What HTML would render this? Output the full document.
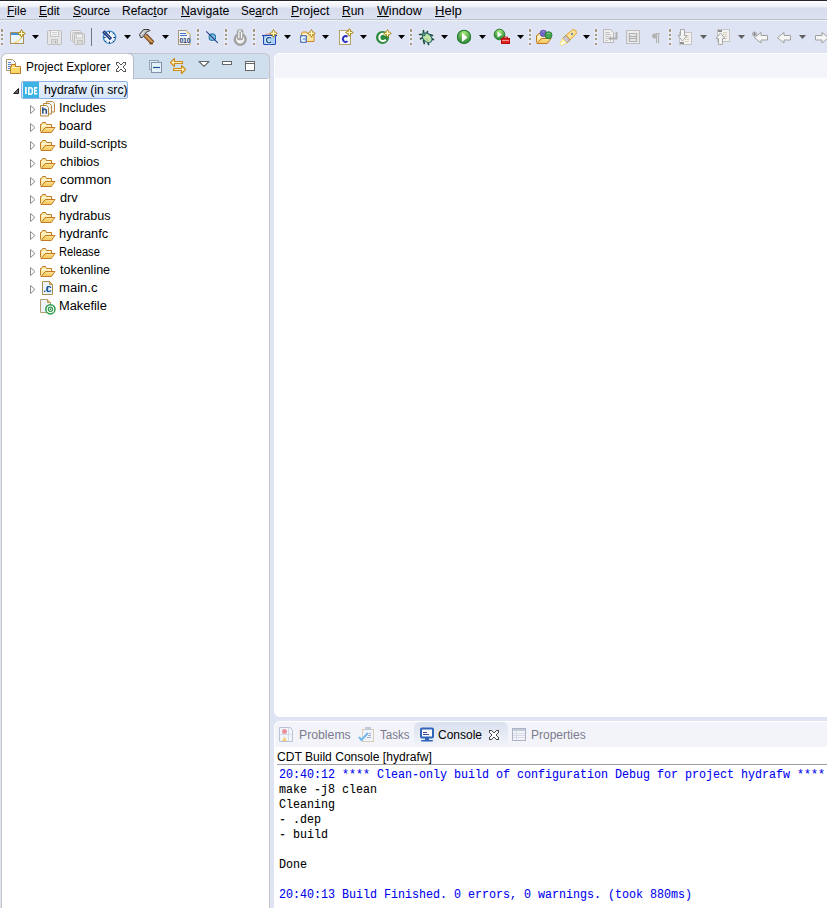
<!DOCTYPE html>
<html><head><meta charset="utf-8">
<style>
html,body{margin:0;padding:0;}
body{width:827px;height:908px;overflow:hidden;position:relative;background:#dfe4f4;font-family:"Liberation Sans",sans-serif;}
.a{position:absolute;}
.t{position:absolute;white-space:pre;font-family:"Liberation Sans",sans-serif;font-size:12px;line-height:14px;color:#000;transform-origin:0 0;}
.t u{text-decoration:underline;text-underline-offset:1px;}
.gray{color:#7a7a8c;}

.m{position:absolute;white-space:pre;font-family:"Liberation Mono",monospace;font-size:12.5px;line-height:15px;color:#000;transform:scaleX(0.9333);transform-origin:0 0;-webkit-text-stroke:0.08px currentColor;}
.blue{color:#0000f0;}
#topline{left:0;top:0;width:827px;height:1px;background:#24252b;}
#menubar{left:0;top:1px;width:827px;height:18px;background:linear-gradient(#ffffff 0px,#f4f6fb 3px,#eceff8 6px,#d7ddee 7px,#dce1f1 17px);}
#ml1{left:0;top:19px;width:827px;height:1px;background:#b9c0d1;}
#ml2{left:0;top:20px;width:827px;height:1px;background:#f1f2ee;}
#pe{left:1px;top:53px;width:267px;height:860px;background:linear-gradient(#fff,#fff) 0 24px/100% 100% no-repeat,linear-gradient(to right,#fff 125px,#d0dfee 125px);border:1px solid #c6c6c6;border-bottom:none;border-radius:6px 6px 0 0;}

#pehdrline{left:133px;top:78px;width:135px;height:1px;background:#b6bfd3;}
#petabr{left:133px;top:57px;width:1px;height:22px;background:#c6c6c6;}
#ed{left:274px;top:53px;width:560px;height:664px;background:#fff;border-radius:6px 0 0 6px;}
#edhdr{left:275px;top:54px;width:560px;height:24px;background:#f3f5fb;border-top-left-radius:5px;}
#con{left:274px;top:721px;width:560px;height:200px;background:#fff;border-radius:6px 0 0 0;}
#conhdr{left:275px;top:722px;width:560px;height:25px;background:#f3f4fa;border-top-left-radius:5px;}
#contab{left:414px;top:722px;width:94px;height:25px;background:linear-gradient(#d9e0ee,#f2f4f9);border-radius:6px 6px 0 0;}
#consep{left:277px;top:764px;width:550px;height:1px;background:#a0a0a0;}
</style></head><body>
<div class="a" id="topline"></div>
<div class="a" id="menubar"></div>
<div class="a" id="ml1"></div>
<div class="a" id="ml2"></div>
<div class="a" id="pe"></div>
<div class="a" id="pehdrline"></div>
<div class="a" id="ed"></div>
<div class="a" id="edhdr"></div>
<div class="a" id="con"></div>
<div class="a" id="conhdr"></div>
<div class="a" id="contab"></div>
<div class="a" id="consep"></div>
<div class="a" style="left:21px;top:81px;width:105px;height:16px;border:1px solid #8fb4e3;border-radius:2px;background:linear-gradient(#eaf2fd,#d6e6fa);"></div>
<div class="t menu" style="left:7.00px;top:4px;"><u>F</u>ile</div>
<div class="t menu" style="left:39.00px;top:4px;"><u>E</u>dit</div>
<div class="t menu" style="left:73.00px;top:4px;transform:scaleX(0.9730);"><u>S</u>ource</div>
<div class="t menu" style="left:122.00px;top:4px;">Refac<u>t</u>or</div>
<div class="t menu" style="left:181.00px;top:4px;transform:scaleX(1.0217);"><u>N</u>avigate</div>
<div class="t menu" style="left:241.03px;top:4px;transform:scaleX(0.9714);">Se<u>a</u>rch</div>
<div class="t menu" style="left:291.00px;top:4px;transform:scaleX(1.0278);"><u>P</u>roject</div>
<div class="t menu" style="left:342.00px;top:4px;"><u>R</u>un</div>
<div class="t menu" style="left:377.00px;top:4px;transform:scaleX(1.0476);"><u>W</u>indow</div>
<div class="t menu" style="left:435.00px;top:4px;transform:scaleX(1.0870);"><u>H</u>elp</div>
<div class="t ui" style="left:26.01px;top:60px;transform:scaleX(0.9880);">Project Explorer</div>
<div class="t ui" style="left:43.98px;top:83px;transform:scaleX(1.0190);">hydrafw (in src)</div>
<div class="t ui" style="left:58.95px;top:101px;transform:scaleX(1.0476);">Includes</div>
<div class="t ui" style="left:58.93px;top:119px;transform:scaleX(1.0714);">board</div>
<div class="t ui" style="left:58.94px;top:137px;transform:scaleX(1.0645);">build-scripts</div>
<div class="t ui" style="left:60.00px;top:155px;transform:scaleX(1.0556);">chibios</div>
<div class="t ui" style="left:60.00px;top:173px;transform:scaleX(1.1136);">common</div>
<div class="t ui" style="left:60.00px;top:191px;transform:scaleX(1.0625);">drv</div>
<div class="t ui" style="left:58.96px;top:209px;transform:scaleX(1.0426);">hydrabus</div>
<div class="t ui" style="left:58.93px;top:227px;transform:scaleX(1.0682);">hydranfc</div>
<div class="t ui" style="left:59.07px;top:245px;transform:scaleX(0.9286);">Release</div>
<div class="t ui" style="left:60.00px;top:263px;transform:scaleX(1.0426);">tokenline</div>
<div class="t ui" style="left:58.91px;top:281px;transform:scaleX(1.0909);">main.c</div>
<div class="t ui" style="left:58.93px;top:299px;transform:scaleX(1.0714);">Makefile</div>
<div class="t ui gray" style="left:298.98px;top:728px;transform:scaleX(1.0208);">Problems</div>
<div class="t ui gray" style="left:380.00px;top:728px;transform:scaleX(0.9655);">Tasks</div>
<div class="t ui" style="left:438.00px;top:728px;">Console</div>
<div class="t ui gray" style="left:531.00px;top:728px;">Properties</div>
<div class="t ui" style="left:276.99px;top:750px;transform:scaleX(1.0066);">CDT Build Console [hydrafw]</div>
<div class="m blue" style="left:279px;top:768px;">20:40:12 **** Clean-only build of configuration Debug for project hydrafw ****</div>
<div class="m" style="left:279px;top:783px;">make -j8 clean</div>
<div class="m" style="left:279px;top:798px;">Cleaning</div>
<div class="m" style="left:279px;top:813px;">- .dep</div>
<div class="m" style="left:279px;top:828px;">- build</div>
<div class="m" style="left:279px;top:858px;">Done</div>
<div class="m blue" style="left:279px;top:888px;">20:40:13 Build Finished. 0 errors, 0 warnings. (took 880ms)</div>
<svg class="a" style="left:0;top:0" width="827" height="908" viewBox="0 0 827 908">
<rect x="0" y="28" width="4" height="18" fill="#eef0f9" opacity="0.6"/>
<rect x="1" y="29" width="2" height="3" fill="#a39a80"/>
<rect x="1" y="34" width="2" height="2" fill="#a39a80"/>
<rect x="1" y="38" width="2" height="2" fill="#a39a80"/>
<rect x="1" y="43" width="2" height="2" fill="#a39a80"/>
<rect x="10.5" y="32.5" width="13" height="11" fill="#eaf6ff" stroke="#a89058"/>
<rect x="11" y="33" width="12" height="2" fill="#3d8fd6"/>
<path d="M13 43 Q20 42 22 36" stroke="#f3d67a" stroke-width="1.2" fill="none"/>
<path d="M21.5 29.6L23.0 32.0L25.4 33.5L23.0 35.0L21.5 37.4L20.0 35.0L17.6 33.5L20.0 32.0z" fill="#c9a020" stroke="#a07c10" stroke-width="0.7"/>
<path d="M21.5 30.9v5.2M18.9 33.5h5.2" stroke="#fff8d0" stroke-width="1.1"/>
<path d="M32 35h7l-3.5 4z" fill="#000"/>
<g transform="translate(47,30)"><path d="M0.5 1.5a1 1 0 0 1 1-1h12a1 1 0 0 1 1 1v12a1 1 0 0 1-1 1h-12a1 1 0 0 1-1-1z" fill="#e6e6e6" stroke="#bdbdbd"/><rect x="3.5" y="0.5" width="8" height="6" fill="#f4f4f4" stroke="#c4c4c4"/><path d="M5 2.5h5M5 4.5h5" stroke="#cfcfcf"/><rect x="4.5" y="9.5" width="6" height="5" fill="#d8d8d8" stroke="#c4c4c4"/><rect x="8" y="11" width="1" height="2" fill="#a8a8a8"/></g>
<g transform="translate(70,30)"><rect x="0.5" y="0.5" width="10" height="10" rx="1" fill="#ececec" stroke="#c4c4c4"/><rect x="2.5" y="2.5" width="10" height="10" rx="1" fill="#e6e6e6" stroke="#c4c4c4"/><path d="M4.5 4.5a1 1 0 0 1 1-1h8a1 1 0 0 1 1 1v9a1 1 0 0 1-1 1h-8a1 1 0 0 1-1-1z" fill="#e2e2e2" stroke="#bdbdbd"/><rect x="6.5" y="4" width="6" height="4" fill="#f2f2f2" stroke="#c8c8c8"/><rect x="7.5" y="10.5" width="5" height="4" fill="#d6d6d6" stroke="#c4c4c4"/></g>
<rect x="91" y="28" width="1" height="18" fill="#6f7787"/>
<circle cx="109.5" cy="37.3" r="6.1" fill="#f2f7fc" stroke="#3a88d0" stroke-width="1.3"/>
<path d="M109.5 31.5v2M109.5 41.5v2M103.6 37.5h2M113.4 37.5h2M105.2 41.8l1-1M113.8 41.8l-1-1M113.8 33.2l-1 1" stroke="#1f3050" stroke-width="1"/>
<path d="M103.3 31.3L111 39.2" stroke="#1a3a88" stroke-width="3.2"/><path d="M104.5 32.5L110 38" stroke="#f2e8a8" stroke-width="1" stroke-dasharray="1 0.6"/>
<path d="M124 35h7l-3.5 4z" fill="#000"/>
<path d="M145.2 35.2L152.8 43" stroke="#5a3010" stroke-width="4.6"/><path d="M145.2 35.2L152.8 43" stroke="#c08848" stroke-width="3"/><path d="M146 35.5L152 41.7" stroke="#e0b070" stroke-width="1"/>
<path d="M149.5 43.5h3.5" stroke="#6a3a10" stroke-width="1.5"/>
<path d="M139.5 34.5L143.5 29.5H149L150 30.5L146.5 32L142.5 37.5H140.5Z" fill="#c4c4c4" stroke="#3c3c3c" stroke-width="1"/><path d="M141.5 34.5L144 31.5" stroke="#eee" stroke-width="1"/>
<path d="M162 35h7l-3.5 4z" fill="#000"/>
<g transform="translate(178,30)"><path d="M0.5 0.5h8l3.5 3.5v10.5h-11.5z" fill="#f2f6fc" stroke="#a09878"/><path d="M8.5 0.5v3.5h3.5z" fill="#f0d890"/><path d="M2 3.5h6M2 5.5h7" stroke="#4a78c0"/><text x="1.5" y="13" font-family="Liberation Sans" font-weight="bold" font-size="7" fill="#1f3f6f" letter-spacing="-0.3">010</text></g>
<rect x="196" y="28" width="4" height="18" fill="#eef0f9" opacity="0.6"/>
<rect x="197" y="29" width="2" height="3" fill="#a39a80"/>
<rect x="197" y="34" width="2" height="2" fill="#a39a80"/>
<rect x="197" y="38" width="2" height="2" fill="#a39a80"/>
<rect x="197" y="43" width="2" height="2" fill="#a39a80"/>
<circle cx="212.3" cy="37.2" r="4.3" fill="#fff"/><circle cx="212.3" cy="37.2" r="3.3" fill="#80bcd8" stroke="#2a78ae" stroke-width="1.1"/><path d="M206.3 31.3L217.8 42.8" stroke="#1e3c88" stroke-width="1.1"/>
<rect x="224" y="28" width="4" height="18" fill="#eef0f9" opacity="0.6"/>
<rect x="225" y="29" width="2" height="3" fill="#a39a80"/>
<rect x="225" y="34" width="2" height="2" fill="#a39a80"/>
<rect x="225" y="38" width="2" height="2" fill="#a39a80"/>
<rect x="225" y="43" width="2" height="2" fill="#a39a80"/>
<circle cx="240.2" cy="39.3" r="5.4" fill="#f4f4f4" stroke="#a2a2a2" stroke-width="2.4"/>
<rect x="236.8" y="29.3" width="6.6" height="11" rx="2.2" fill="#a6a6a6"/><rect x="238.3" y="32.2" width="1.1" height="6" fill="#fff"/><rect x="241" y="32.2" width="1.1" height="6" fill="#fff"/><rect x="238.3" y="30.4" width="2.8" height="1.2" fill="#fff"/>
<rect x="252" y="28" width="4" height="18" fill="#eef0f9" opacity="0.6"/>
<rect x="253" y="29" width="2" height="3" fill="#a39a80"/>
<rect x="253" y="34" width="2" height="2" fill="#a39a80"/>
<rect x="253" y="38" width="2" height="2" fill="#a39a80"/>
<rect x="253" y="43" width="2" height="2" fill="#a39a80"/>
<path d="M265.5 34.5h5" stroke="#d8a898" stroke-width="2"/>
<rect x="263.5" y="35.5" width="12" height="9" rx="0.5" fill="#a8d0f4" stroke="#2848c0"/><path d="M262 35.5h15" stroke="#2848c0" stroke-width="1.2"/>
<path d="M271 38.3a2.6 2.6 0 1 0 0 3.6" stroke="#fff" stroke-width="3" fill="none"/><path d="M271 38.3a2.6 2.6 0 1 0 0 3.6" stroke="#1a5a9a" stroke-width="1.6" fill="none"/>
<path d="M273.5 29.5L275.0 31.9L277.4 33.4L275.0 34.9L273.5 37.3L272.0 34.9L269.6 33.4L272.0 31.9z" fill="#c9a020" stroke="#a07c10" stroke-width="0.7"/>
<path d="M273.5 30.799999999999997v5.2M270.9 33.4h5.2" stroke="#fff8d0" stroke-width="1.1"/>
<path d="M284 35h7l-3.5 4z" fill="#000"/>
<path d="M301.5 41.5v-8l1-1.5h4l1 1.5h6.5v8z" fill="#fde3a0" stroke="#d08828"/><path d="M303 34.5h10" stroke="#fff6d8"/>
<rect x="300.5" y="35.5" width="6" height="7" rx="0.5" fill="#8eb0e6" stroke="#5a78b4"/>
<path d="M305 37.8a1.9 1.9 0 1 0 0 2.6" stroke="#fff" stroke-width="1.4" fill="none"/>
<path d="M311.5 29.5L313.0 31.9L315.4 33.4L313.0 34.9L311.5 37.3L310.0 34.9L307.6 33.4L310.0 31.9z" fill="#c9a020" stroke="#a07c10" stroke-width="0.7"/>
<path d="M311.5 30.799999999999997v5.2M308.9 33.4h5.2" stroke="#fff8d0" stroke-width="1.1"/>
<path d="M322 35h7l-3.5 4z" fill="#000"/>
<rect x="339.5" y="30.5" width="11" height="14" fill="#f4f8fd" stroke="#b8a468"/>
<path d="M347.5 36.8a2.7 3 0 1 0 0 4.4" stroke="#3030c0" stroke-width="1.9" fill="none"/>
<path d="M349.4 28.6L350.9 31.0L353.29999999999995 32.5L350.9 34.0L349.4 36.4L347.9 34.0L345.5 32.5L347.9 31.0z" fill="#c9a020" stroke="#a07c10" stroke-width="0.7"/>
<path d="M349.4 29.9v5.2M346.79999999999995 32.5h5.2" stroke="#fff8d0" stroke-width="1.1"/>
<path d="M360 35h7l-3.5 4z" fill="#000"/>
<circle cx="382.5" cy="37.4" r="6.5" fill="#2e8a3e"/><path d="M385.8 35.3a3.6 3.6 0 1 0 0 4.3" stroke="#fff" stroke-width="2" fill="none"/>
<path d="M387.5 29.5L389.0 31.9L391.4 33.4L389.0 34.9L387.5 37.3L386.0 34.9L383.6 33.4L386.0 31.9z" fill="#c9a020" stroke="#a07c10" stroke-width="0.7"/>
<path d="M387.5 30.799999999999997v5.2M384.9 33.4h5.2" stroke="#fff8d0" stroke-width="1.1"/>
<path d="M398 35h7l-3.5 4z" fill="#000"/>
<rect x="409" y="28" width="4" height="18" fill="#eef0f9" opacity="0.6"/>
<rect x="410" y="29" width="2" height="3" fill="#a39a80"/>
<rect x="410" y="34" width="2" height="2" fill="#a39a80"/>
<rect x="410" y="38" width="2" height="2" fill="#a39a80"/>
<rect x="410" y="43" width="2" height="2" fill="#a39a80"/>
<g stroke="#1e4a30" stroke-width="1.6" fill="none" stroke-linecap="round"><path d="M423.5 30.5v3M427.5 31.5l-0.8 2.5M419.5 34.5h3M420.5 38.8l2-1M423.5 40.5l0.8 3M427.8 42l0.8 2.5M429.5 34.5l3 1M431.5 38.5l2 1.2"/></g>
<ellipse cx="427.2" cy="37.8" rx="3.9" ry="5.4" transform="rotate(-45 427.2 37.8)" fill="#c4e4a8" stroke="#226070" stroke-width="1.1"/>
<circle cx="423.8" cy="34.4" r="1.6" fill="#5aa060" stroke="#226070" stroke-width="0.8"/><path d="M426 38.5l2.5 2.5" stroke="#7ab068" stroke-width="1"/>
<path d="M441 35h7l-3.5 4z" fill="#000"/>
<defs><radialGradient id="gr" cx="0.5" cy="0.2" r="0.8"><stop offset="0" stop-color="#a8e878"/><stop offset="0.6" stop-color="#56a850"/><stop offset="1" stop-color="#2e8a38"/></radialGradient></defs>
<circle cx="464" cy="36.9" r="6.6" fill="url(#gr)" stroke="#1c7a2c" stroke-width="1.1"/><path d="M462 32.7L467.5 37.4L462 42z" fill="#fff"/>
<path d="M479 35h7l-3.5 4z" fill="#000"/>
<circle cx="499.5" cy="34.5" r="5.3" fill="url(#gr)" stroke="#1c7a2c"/><path d="M497.5 31.5l4.5 3l-4.5 3z" fill="#fff"/>
<rect x="501.5" y="38.5" width="8" height="5" fill="#e22020" stroke="#b01010"/><path d="M503.5 38.5v-1.5h4v1.5" stroke="#c01010" fill="none"/><path d="M502 40.5h7" stroke="#ff9090"/>
<path d="M517 35h7l-3.5 4z" fill="#000"/>
<rect x="528" y="28" width="4" height="18" fill="#eef0f9" opacity="0.6"/>
<rect x="529" y="29" width="2" height="3" fill="#a39a80"/>
<rect x="529" y="34" width="2" height="2" fill="#a39a80"/>
<rect x="529" y="38" width="2" height="2" fill="#a39a80"/>
<rect x="529" y="43" width="2" height="2" fill="#a39a80"/>
<g transform="translate(536,30)"><path d="M0.5 12.5V5.5H1.5L2.5 3.5H5.5L6.5 5.5H11.5V8.5" fill="#fbe9a8" stroke="#c27a22"/><path d="M1.5 6.8H10.8" stroke="#fff8dc" stroke-width="1.2"/><path d="M1 13.5L5.3 8.5H15L11.3 13.5Z" fill="#f7cf6a" stroke="#c27a22" stroke-linejoin="round"/><path d="M6.3 9.8H13.5" stroke="#fce7a6" stroke-width="1"/></g>
<circle cx="543.3" cy="33.4" r="3.3" fill="#7464c4" stroke="#5a4aa0" stroke-width="0.6"/><path d="M542 31.8h2.5" stroke="#a8a0e0" stroke-width="0.8"/>
<circle cx="548.5" cy="35.2" r="3.5" fill="#46a654" stroke="#1f7a30" stroke-width="0.9"/><path d="M547 33.5h3" stroke="#90d090" stroke-width="0.8"/>
<path d="M565.95 35.45L572.81 29.62L576.35 33.42L570.03 39.85ZL575.90 30.29" fill="#fbe49a" stroke="#e2a436" stroke-width="0.9"/>
<path d="M565.95 35.45L572.81 29.62L575.90 30.29L576.35 33.42L570.03 39.85Z" fill="#fbe49a" stroke="#e2a436" stroke-width="0.9"/>
<circle cx="572.02" cy="33.90" r="0.9" fill="#2a58b0"/>
<path d="M562.58 38.44L565.81 35.31L570.17 39.99L566.80 42.98Z" fill="#cbc7d0" stroke="#a88848" stroke-width="0.9"/>
<path d="M559.70 43.72L562.58 38.44L566.80 42.98L561.34 45.47Z" fill="#fff4b0" stroke="#f2d060" stroke-width="0.6"/>
<path d="M561.03 44.12L565.01 41.79" stroke="#fff" stroke-width="1.5"/>
<path d="M583 35h7l-3.5 4z" fill="#000"/>
<rect x="594" y="28" width="4" height="18" fill="#eef0f9" opacity="0.6"/>
<rect x="595" y="29" width="2" height="3" fill="#a39a80"/>
<rect x="595" y="34" width="2" height="2" fill="#a39a80"/>
<rect x="595" y="38" width="2" height="2" fill="#a39a80"/>
<rect x="595" y="43" width="2" height="2" fill="#a39a80"/>
<g stroke="#b8b8b8" fill="#eeeeee"><path d="M603.5 29.5h7l3 3v10h-10z"/></g><path d="M605.5 32.5h4M605.5 34.5h5M605.5 36.5h3M605.5 38.5h2M605.5 40.5h2" stroke="#bdbdbd"/>
<path d="M616.5 32v6.5h-5.5" stroke="#b0b0b0" stroke-width="2" fill="none"/><path d="M608 38.5l3-2.5v5z" fill="#b0b0b0"/>
<rect x="626.5" y="30.5" width="13" height="13" fill="#efefef" stroke="#bcbcbc"/><rect x="629.5" y="33.5" width="7" height="8" fill="#e4e4e4" stroke="#b0b0b0"/><path d="M630 36.5h6M630 38.5h6" stroke="#b0b0b0"/>
<path d="M628 32.5v10M638 32.5v10" stroke="#c0c0c0" stroke-dasharray="1 1"/>
<path d="M655.5 33.5h4.5M656.5 33.5v9.5M658.5 33.5v9.5" stroke="#b4b4b4" stroke-width="1.2"/><circle cx="654.5" cy="36" r="2.5" fill="#b4b4b4"/>
<rect x="668" y="28" width="4" height="18" fill="#eef0f9" opacity="0.6"/>
<rect x="669" y="29" width="2" height="3" fill="#a39a80"/>
<rect x="669" y="34" width="2" height="2" fill="#a39a80"/>
<rect x="669" y="38" width="2" height="2" fill="#a39a80"/>
<rect x="669" y="43" width="2" height="2" fill="#a39a80"/>
<rect x="679.5" y="32.5" width="12" height="12" fill="#f2f2f2" stroke="#c4c4c4"/><path d="M685 35.5h4M685 37.5h4M685 39.5h4M685 41.5h4" stroke="#d8d0b8"/><rect x="680" y="42" width="4" height="2" fill="#909090"/>
<path d="M680.5 29.5h4v6h2.5l-4.5 5.5l-4.5-5.5h2.5z" fill="#f4f4f4" stroke="#a8a8a8"/>
<path d="M700 35h7l-3.5 4z" fill="#606060"/>
<rect x="717.5" y="29.5" width="12" height="12" fill="#f2f2f2" stroke="#c4c4c4"/><path d="M723 32.5h4M723 34.5h4M723 36.5h4M723 38.5h4" stroke="#d8d0b8"/><rect x="718" y="30" width="4" height="2" fill="#909090"/>
<path d="M718.5 44.5h4v-6h2.5l-4.5-5.5l-4.5 5.5h2.5z" fill="#f4f4f4" stroke="#a8a8a8"/>
<path d="M738 35h7l-3.5 4z" fill="#606060"/>
<path d="M767.5 35.5v4.5h-6.5v3l-6.5-5.3l6.5-5.3v3.1z" fill="#f6f6f6" stroke="#a0a0a0"/>
<path d="M754.5 31.5v5M752 34h5M752.7 32.2l3.6 3.6M756.3 32.2l-3.6 3.6" stroke="#8a8a8a" stroke-width="0.9"/>
<path d="M790.5 35.5v4.5h-6.5v3l-6.5-5.3l6.5-5.3v3.1z" fill="#f6f6f6" stroke="#a0a0a0"/>
<path d="M799 35h7l-3.5 4z" fill="#606060"/>
<path d="M815.5 35.5v4.5h6.5v3l6.5-5.3l-6.5-5.3v3.1z" fill="#f6f6f6" stroke="#a0a0a0"/>
<path d="M6.5 59.5h6l3 3v8h-9z" fill="#f4f7fc" stroke="#a89868"/><path d="M8 62.5h3M8 64.5h3M8 66.5h3M8 68.5h3" stroke="#5a88d0"/>
<path d="M10.5 73.5v-7h1v-2h4v2h5v7z" fill="#fbd86a" stroke="#c0782a"/><path d="M11.5 67.5h8" stroke="#fff4c0"/>
<rect x="117" y="63" width="2" height="1" fill="#fff"/>
<rect x="123" y="63" width="2" height="1" fill="#fff"/>
<rect x="117" y="64" width="3" height="1" fill="#fff"/>
<rect x="122" y="64" width="3" height="1" fill="#fff"/>
<rect x="118" y="65" width="6" height="1" fill="#fff"/>
<rect x="119" y="66" width="4" height="1" fill="#fff"/>
<rect x="119" y="67" width="4" height="1" fill="#fff"/>
<rect x="118" y="68" width="6" height="1" fill="#fff"/>
<rect x="117" y="69" width="3" height="1" fill="#fff"/>
<rect x="122" y="69" width="3" height="1" fill="#fff"/>
<rect x="117" y="70" width="2" height="1" fill="#fff"/>
<rect x="123" y="70" width="2" height="1" fill="#fff"/>
<path d="M116 62h1v1h-1zM117 62h1v1h-1zM118 62h1v1h-1zM123 62h1v1h-1zM124 62h1v1h-1zM125 62h1v1h-1zM116 63h1v1h-1zM119 63h1v1h-1zM122 63h1v1h-1zM125 63h1v1h-1zM116 64h1v1h-1zM120 64h1v1h-1zM121 64h1v1h-1zM125 64h1v1h-1zM117 65h1v1h-1zM124 65h1v1h-1zM118 66h1v1h-1zM123 66h1v1h-1zM118 67h1v1h-1zM123 67h1v1h-1zM117 68h1v1h-1zM124 68h1v1h-1zM116 69h1v1h-1zM120 69h1v1h-1zM121 69h1v1h-1zM125 69h1v1h-1zM116 70h1v1h-1zM119 70h1v1h-1zM122 70h1v1h-1zM125 70h1v1h-1zM116 71h1v1h-1zM117 71h1v1h-1zM118 71h1v1h-1zM123 71h1v1h-1zM124 71h1v1h-1zM125 71h1v1h-1z" fill="#555555"/>
<path d="M127 54H128.5Q133 54 133 58.5V78H127Z" fill="#fff"/><path d="M128 53.5Q133.5 53.5 133.5 59V78.5" fill="none" stroke="#b2bacb" stroke-width="1"/>
<rect x="149.5" y="60.5" width="9" height="9" fill="#d8ecf8" stroke="#9aa2b8"/><rect x="151.5" y="62.5" width="10" height="10" fill="#e4f2fb" stroke="#8890a8"/><path d="M153 67.5h7" stroke="#1f4f8f" stroke-width="1.2"/>
<path d="M170.5 62.5L174.5 58.5V61.5H182.5V63.5H174.5V66.5Z" fill="#fff2c0" stroke="#cc8a18" stroke-width="1.1" stroke-linejoin="round"/>
<path d="M185.5 69.5L181.5 65.5V68.5H173.5V70.5H181.5V73.5Z" fill="#fff2c0" stroke="#cc8a18" stroke-width="1.1" stroke-linejoin="round"/>
<path d="M199 61.5H209L204 66.3Z" fill="#fff" stroke="#666" stroke-width="1.1" stroke-linejoin="round"/>
<rect x="222.5" y="61.5" width="9" height="3" fill="#fff" stroke="#666"/>
<rect x="245.5" y="61.5" width="9" height="9" fill="#fff" stroke="#666"/><rect x="246" y="63" width="8" height="1" fill="#666"/>
<path d="M13.7 93.5L18.5 88.5V93.5Z" fill="#6a6a6a" stroke="#1c1c1c" stroke-width="1" stroke-linejoin="round"/>
<rect x="23" y="82" width="16" height="16" fill="#3bb4e5"/>
<rect x="25" y="87" width="1.7" height="7" fill="#fff"/>
<path d="M28.8 87.8h1.5q2 0 2 2v2.4q0 2-2 2h-1.5z" stroke="#fff" stroke-width="1.5" fill="none"/>
<path d="M37.3 87.8h-2.6v5.9h2.6M34.7 90.7h2.3" stroke="#fff" stroke-width="1.5" fill="none"/>
<path d="M30.5 105.5L35 109.5L30.5 113.5z" fill="#fff" stroke="#8e8e8e" stroke-width="1"/>
<path d="M46.5 101.5h6l2 2v8.5h-8z" fill="#f2f6fc" stroke="#b88a3a"/>
<path d="M43.5 103.5h6l2 2v8.5h-8z" fill="#f2f6fc" stroke="#b88a3a"/>
<path d="M40.5 105.5h6l2 2v8.5h-8z" fill="#f2f6fc" stroke="#b88a3a"/>
<path d="M42.8 107.2V113.8M42.8 110.6Q43.3 109.2 44.8 109.2Q46.3 109.2 46.3 110.8V113.8" stroke="#2b4f7f" stroke-width="1.5" fill="none"/>
<path d="M30.5 123.5L35 127.5L30.5 131.5z" fill="#fff" stroke="#8e8e8e" stroke-width="1"/>
<g transform="translate(40,119)"><path d="M0.5 12.5V5.5H1.5L2.5 3.5H5.5L6.5 5.5H11.5V8.5" fill="#fbe9a8" stroke="#c27a22"/><path d="M1.5 6.8H10.8" stroke="#fff8dc" stroke-width="1.2"/><path d="M1 13.5L5.3 8.5H15L11.3 13.5Z" fill="#f7cf6a" stroke="#c27a22" stroke-linejoin="round"/><path d="M6.3 9.8H13.5" stroke="#fce7a6" stroke-width="1"/></g>
<path d="M30.5 141.5L35 145.5L30.5 149.5z" fill="#fff" stroke="#8e8e8e" stroke-width="1"/>
<g transform="translate(40,137)"><path d="M0.5 12.5V5.5H1.5L2.5 3.5H5.5L6.5 5.5H11.5V8.5" fill="#fbe9a8" stroke="#c27a22"/><path d="M1.5 6.8H10.8" stroke="#fff8dc" stroke-width="1.2"/><path d="M1 13.5L5.3 8.5H15L11.3 13.5Z" fill="#f7cf6a" stroke="#c27a22" stroke-linejoin="round"/><path d="M6.3 9.8H13.5" stroke="#fce7a6" stroke-width="1"/></g>
<path d="M30.5 159.5L35 163.5L30.5 167.5z" fill="#fff" stroke="#8e8e8e" stroke-width="1"/>
<g transform="translate(40,155)"><path d="M0.5 12.5V5.5H1.5L2.5 3.5H5.5L6.5 5.5H11.5V8.5" fill="#fbe9a8" stroke="#c27a22"/><path d="M1.5 6.8H10.8" stroke="#fff8dc" stroke-width="1.2"/><path d="M1 13.5L5.3 8.5H15L11.3 13.5Z" fill="#f7cf6a" stroke="#c27a22" stroke-linejoin="round"/><path d="M6.3 9.8H13.5" stroke="#fce7a6" stroke-width="1"/></g>
<path d="M30.5 177.5L35 181.5L30.5 185.5z" fill="#fff" stroke="#8e8e8e" stroke-width="1"/>
<g transform="translate(40,173)"><path d="M0.5 12.5V5.5H1.5L2.5 3.5H5.5L6.5 5.5H11.5V8.5" fill="#fbe9a8" stroke="#c27a22"/><path d="M1.5 6.8H10.8" stroke="#fff8dc" stroke-width="1.2"/><path d="M1 13.5L5.3 8.5H15L11.3 13.5Z" fill="#f7cf6a" stroke="#c27a22" stroke-linejoin="round"/><path d="M6.3 9.8H13.5" stroke="#fce7a6" stroke-width="1"/></g>
<path d="M30.5 195.5L35 199.5L30.5 203.5z" fill="#fff" stroke="#8e8e8e" stroke-width="1"/>
<g transform="translate(40,191)"><path d="M0.5 12.5V5.5H1.5L2.5 3.5H5.5L6.5 5.5H11.5V8.5" fill="#fbe9a8" stroke="#c27a22"/><path d="M1.5 6.8H10.8" stroke="#fff8dc" stroke-width="1.2"/><path d="M1 13.5L5.3 8.5H15L11.3 13.5Z" fill="#f7cf6a" stroke="#c27a22" stroke-linejoin="round"/><path d="M6.3 9.8H13.5" stroke="#fce7a6" stroke-width="1"/></g>
<path d="M30.5 213.5L35 217.5L30.5 221.5z" fill="#fff" stroke="#8e8e8e" stroke-width="1"/>
<g transform="translate(40,209)"><path d="M0.5 12.5V5.5H1.5L2.5 3.5H5.5L6.5 5.5H11.5V8.5" fill="#fbe9a8" stroke="#c27a22"/><path d="M1.5 6.8H10.8" stroke="#fff8dc" stroke-width="1.2"/><path d="M1 13.5L5.3 8.5H15L11.3 13.5Z" fill="#f7cf6a" stroke="#c27a22" stroke-linejoin="round"/><path d="M6.3 9.8H13.5" stroke="#fce7a6" stroke-width="1"/></g>
<path d="M30.5 231.5L35 235.5L30.5 239.5z" fill="#fff" stroke="#8e8e8e" stroke-width="1"/>
<g transform="translate(40,227)"><path d="M0.5 12.5V5.5H1.5L2.5 3.5H5.5L6.5 5.5H11.5V8.5" fill="#fbe9a8" stroke="#c27a22"/><path d="M1.5 6.8H10.8" stroke="#fff8dc" stroke-width="1.2"/><path d="M1 13.5L5.3 8.5H15L11.3 13.5Z" fill="#f7cf6a" stroke="#c27a22" stroke-linejoin="round"/><path d="M6.3 9.8H13.5" stroke="#fce7a6" stroke-width="1"/></g>
<path d="M30.5 249.5L35 253.5L30.5 257.5z" fill="#fff" stroke="#8e8e8e" stroke-width="1"/>
<g transform="translate(40,245)"><path d="M0.5 12.5V5.5H1.5L2.5 3.5H5.5L6.5 5.5H11.5V8.5" fill="#fbe9a8" stroke="#c27a22"/><path d="M1.5 6.8H10.8" stroke="#fff8dc" stroke-width="1.2"/><path d="M1 13.5L5.3 8.5H15L11.3 13.5Z" fill="#f7cf6a" stroke="#c27a22" stroke-linejoin="round"/><path d="M6.3 9.8H13.5" stroke="#fce7a6" stroke-width="1"/></g>
<path d="M30.5 267.5L35 271.5L30.5 275.5z" fill="#fff" stroke="#8e8e8e" stroke-width="1"/>
<g transform="translate(40,263)"><path d="M0.5 12.5V5.5H1.5L2.5 3.5H5.5L6.5 5.5H11.5V8.5" fill="#fbe9a8" stroke="#c27a22"/><path d="M1.5 6.8H10.8" stroke="#fff8dc" stroke-width="1.2"/><path d="M1 13.5L5.3 8.5H15L11.3 13.5Z" fill="#f7cf6a" stroke="#c27a22" stroke-linejoin="round"/><path d="M6.3 9.8H13.5" stroke="#fce7a6" stroke-width="1"/></g>
<path d="M30.5 285.5L35 289.5L30.5 293.5z" fill="#fff" stroke="#8e8e8e" stroke-width="1"/>
<path d="M42.5 281.5h7l3 3v10h-10z" fill="#eef4fc" stroke="#a8904c"/><path d="M49.5 281.5v3h3z" fill="#e0c070" stroke="#b89848"/>
<g fill="#1f5a9a"><rect x="44" y="290.6" width="1.4" height="1.4"/><rect x="46.2" y="287" width="2" height="4.2" rx="0.6"/><rect x="47" y="286" width="3.3" height="1.3"/><rect x="47" y="290.8" width="3.3" height="1.3"/><rect x="50" y="286.7" width="1.2" height="1.3"/><rect x="50" y="290.2" width="1.2" height="1.3"/></g>
<path d="M40.5 299.5h7l3 3v10h-10z" fill="#eef3fb" stroke="#b0a070"/><path d="M47.5 299.5v3h3" fill="#e8c878" stroke="#b89848"/>
<circle cx="50.4" cy="309.3" r="4.6" fill="#fff" stroke="#2a9a4a" stroke-width="1.5"/><circle cx="50.4" cy="309.3" r="2.1" fill="none" stroke="#2a9a4a" stroke-width="1.2"/><circle cx="50.4" cy="309.3" r="0.7" fill="#1a6a2a"/>
<g opacity="0.75"><path d="M279.5 727.5h11l2 3v11h-13z" fill="#eef6fc" stroke="#a8b0c8"/><path d="M288.5 727.5v14M279.5 734.5h12" stroke="#c8d4ea"/><circle cx="284.5" cy="731.5" r="2.5" fill="#e87080"/><path d="M282 741l2.5-4.5l2.5 4.5z" fill="#f8c050"/></g>
<g opacity="0.7"><rect x="362.5" y="729.5" width="11" height="12" fill="#f0f4fa" stroke="#d4bc98"/><rect x="365" y="727" width="6" height="3" fill="#b0b8cc"/><path d="M369 733.5h2M368 735.5h3M367 737.5h4" stroke="#8890b0"/><path d="M359 737l2.5 3l6.5-7" stroke="#3aa0e8" stroke-width="2" fill="none"/></g>
<rect x="421" y="728.5" width="12" height="9" rx="1" fill="#fff" stroke="#2f64b8" stroke-width="2"/><path d="M423 732.5h4M423 734.5h6" stroke="#3a4a8a"/><rect x="425" y="738" width="4" height="2" fill="#2f64b8"/><rect x="421" y="740" width="12" height="1.5" rx="0.7" fill="#2f64b8"/>
<rect x="490" y="731" width="2" height="1" fill="#fff"/>
<rect x="496" y="731" width="2" height="1" fill="#fff"/>
<rect x="490" y="732" width="3" height="1" fill="#fff"/>
<rect x="495" y="732" width="3" height="1" fill="#fff"/>
<rect x="491" y="733" width="6" height="1" fill="#fff"/>
<rect x="492" y="734" width="4" height="1" fill="#fff"/>
<rect x="492" y="735" width="4" height="1" fill="#fff"/>
<rect x="491" y="736" width="6" height="1" fill="#fff"/>
<rect x="490" y="737" width="3" height="1" fill="#fff"/>
<rect x="495" y="737" width="3" height="1" fill="#fff"/>
<rect x="490" y="738" width="2" height="1" fill="#fff"/>
<rect x="496" y="738" width="2" height="1" fill="#fff"/>
<path d="M489 730h1v1h-1zM490 730h1v1h-1zM491 730h1v1h-1zM496 730h1v1h-1zM497 730h1v1h-1zM498 730h1v1h-1zM489 731h1v1h-1zM492 731h1v1h-1zM495 731h1v1h-1zM498 731h1v1h-1zM489 732h1v1h-1zM493 732h1v1h-1zM494 732h1v1h-1zM498 732h1v1h-1zM490 733h1v1h-1zM497 733h1v1h-1zM491 734h1v1h-1zM496 734h1v1h-1zM491 735h1v1h-1zM496 735h1v1h-1zM490 736h1v1h-1zM497 736h1v1h-1zM489 737h1v1h-1zM493 737h1v1h-1zM494 737h1v1h-1zM498 737h1v1h-1zM489 738h1v1h-1zM492 738h1v1h-1zM495 738h1v1h-1zM498 738h1v1h-1zM489 739h1v1h-1zM490 739h1v1h-1zM491 739h1v1h-1zM496 739h1v1h-1zM497 739h1v1h-1zM498 739h1v1h-1z" fill="#4a4a4a"/>
<g opacity="0.8"><rect x="512.5" y="728.5" width="13" height="12" fill="#f4f6fa" stroke="#9aa4b8"/><rect x="513" y="729" width="12" height="2" fill="#b8c0d0"/><path d="M516.5 731v9M513 733.5h12M513 735.5h12M513 737.5h12" stroke="#d0d6e0"/></g>
</svg>
</body></html>
